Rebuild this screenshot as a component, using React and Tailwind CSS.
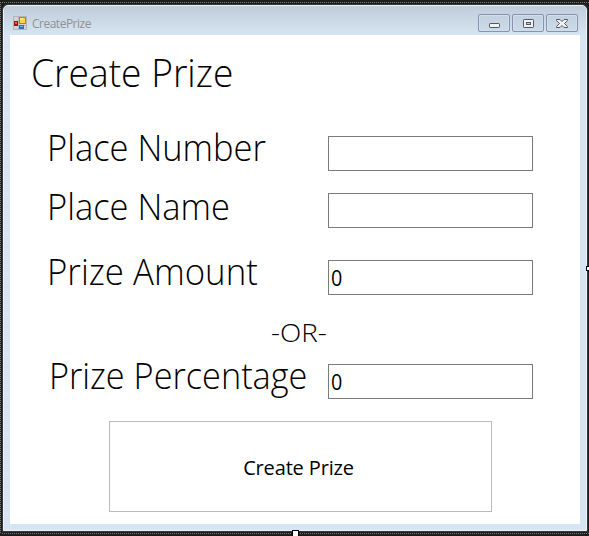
import React from "react";

function FormIcon() {
  return (
    <svg width="14" height="14" viewBox="0 0 14 14" shapeRendering="crispEdges">
      <rect x="0.5" y="0.5" width="13" height="13" fill="#cfd4da" stroke="#b5b5b5" />
      <rect x="5" y="1" width="1" height="12" fill="#b5b5b5" />
      <rect x="1" y="9" width="12" height="1" fill="#b5b5b5" />
      <rect x="6" y="1" width="7" height="7" fill="#b8860b" />
      <rect x="7" y="2" width="5" height="5" fill="#fbd34a" />
      <rect x="7" y="2" width="3" height="2" fill="#ffe98c" />
      <rect x="1" y="5" width="4" height="5" fill="#a31208" />
      <rect x="2" y="6" width="2" height="2" fill="#ee5a3c" />
      <rect x="6" y="9" width="5" height="4" fill="#3468c4" />
      <rect x="7" y="10" width="3" height="1" fill="#82b0f5" />
    </svg>
  );
}

function CaptionButton({ children }) {
  return (
    <button className="flex h-[18px] w-8 items-center justify-center rounded-[2px] border border-[#8593ad] bg-gradient-to-b from-[#c3d0df] to-[#cddaea] shadow-[inset_0_0_0_1px_#d3deeb]">
      {children}
    </button>
  );
}

function Field({ label, value, className, labelClass }) {
  return (
    <div className={"flex h-[35px] items-start " + className}>
      <label className="w-[281px] shrink-0 text-[36px] leading-[35px] font-light whitespace-nowrap">
        <span className={"block origin-left " + labelClass}>{label}</span>
      </label>
      <div className="flex h-[35px] w-[205px] items-center border border-[#7a7a7a] bg-white pt-px pl-0.5 text-[21px] leading-none">
        <span className="origin-left scale-x-[0.94]">{value}</span>
      </div>
    </div>
  );
}

export default function App() {
  return (
    <div className="relative h-[536px] w-[589px] overflow-hidden bg-[#1e1e1e] pt-[5px] pl-[3px] font-['Open_Sans','Noto_Sans',sans-serif] text-black">
      <div className="absolute top-[2px] left-0 h-px w-full bg-[repeating-linear-gradient(90deg,#77777a_0_1px,#1e1e1e_1px_2px)]" />
      <div className="absolute top-[533px] left-0 h-px w-full bg-[repeating-linear-gradient(90deg,#77777a_0_1px,#1e1e1e_1px_2px)]" />
      <div className="absolute top-[2px] left-0 h-[532px] w-px bg-[repeating-linear-gradient(180deg,#77777a_0_1px,#1e1e1e_1px_2px)]" />
      <div className="flex h-[526px] w-[584px] flex-col rounded-t-[5px] border border-[#edf2f8] bg-[#d7e4f2] px-1.5 shadow-[0_0_0_1px_#38383b]">
        <header className="-mx-1.5 flex h-[29px] shrink-0 items-start rounded-t-[4px] bg-gradient-to-b from-[#bfcddb] to-[#d7e4f2] pl-[9px]">
          <div className="mt-[10px]">
            <FormIcon />
          </div>
          <span className="mt-[10px] ml-[5px] text-[12px] leading-[16px] tracking-[-0.5px] text-[#8f9193]">CreatePrize</span>
          <div className="mt-2 mr-2 ml-auto flex gap-[2px]">
            <CaptionButton>
              <svg className="mt-1" width="11" height="5" viewBox="0 0 11 5">
                <rect x="0.5" y="0.5" width="10" height="4" rx="0.7" fill="#f2f2f2" stroke="#535666" />
              </svg>
            </CaptionButton>
            <CaptionButton>
              <svg width="11" height="9" viewBox="0 0 11 9">
                <rect x="0.5" y="0.5" width="10" height="8" rx="0.7" fill="#f2f2f2" stroke="#535666" />
                <rect x="3.5" y="3.5" width="4" height="2" fill="#c5d2e1" stroke="#535666" />
              </svg>
            </CaptionButton>
            <CaptionButton>
              <svg width="12" height="9" viewBox="0 0 12 9">
                <path d="M.5.5H4L6 2.5 8 .5h3.5v1L8.5 4.5l3 3v1H8L6 6.5l-2 2H.5v-1l3-3-3-3z" fill="#f2f2f2" stroke="#535666" />
              </svg>
            </CaptionButton>
          </div>
        </header>
        <main className="flex h-[489px] w-[570px] shrink-0 flex-col bg-white">
          <h1 className="mt-[13px] ml-[21px] h-[49px] text-[39px] leading-[48px] font-light whitespace-nowrap">
            <span className="block origin-left scale-x-[0.953]">Create Prize</span>
          </h1>
          <Field className="mt-[39px] pl-[37px]" label="Place Number" value="" labelClass="-mt-[6px] scale-x-[0.957]" />
          <Field className="mt-[22px] pl-[37px]" label="Place Name" value="" labelClass="-mt-[4px] scale-x-[0.957]" />
          <Field className="mt-[32px] pl-[37px]" label="Prize Amount" value="0" labelClass="-mt-[6px] scale-x-[0.967]" />
          <div className="mt-[19px] ml-[261px] h-[37px] w-[60px] origin-left scale-x-[1.07] text-[26px] leading-[36px] font-light">-OR-</div>
          <Field className="mt-[13px] pl-[37px]" label="Prize Percentage" value="0" labelClass="-mt-[6px] pl-0.5 scale-x-[0.952]" />
          <button className="mt-[22px] ml-[99px] flex h-[91px] w-[383px] shrink-0 items-center justify-center border border-[#bcbcbc] bg-white pt-0.5 pr-1 text-[20px] tracking-[-0.15px]">
            Create Prize
          </button>
        </main>
      </div>
      <div className="absolute top-[266px] left-[586px] h-[5px] w-[5px] border border-black bg-white" />
      <div className="absolute top-[530px] left-[292px] h-[8px] w-[7px] border border-black bg-white" />
    </div>
  );
}
